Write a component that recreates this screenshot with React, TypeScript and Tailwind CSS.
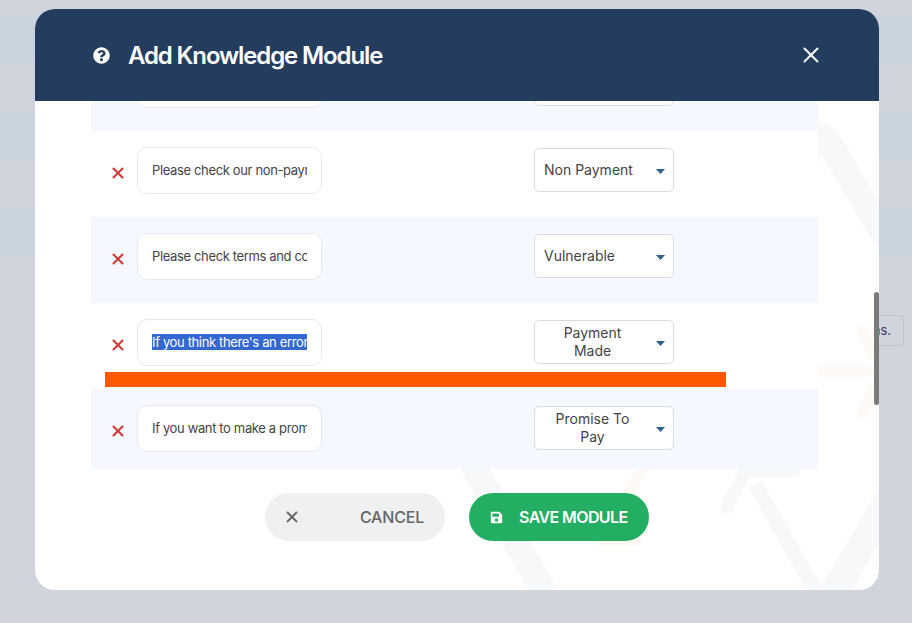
import { X } from "lucide-react";
import { FaQuestionCircle, FaSave } from "react-icons/fa";

const rows = [
  { text: "Please check our non-payment terms", label: "Arrangement", tinted: true, height: "h-[86px]" },
  { text: "Please check our non-payment terms", label: "Non Payment", tinted: false, height: "h-[86px]" },
  { text: "Please check terms and conditions", label: "Vulnerable", tinted: true, height: "h-[86px]" },
  { text: "If you think there's an error on this", label: "Payment Made", tinted: false, height: "h-[86px]", selected: true, wrapped: true },
  { text: "If you want to make a promise to pay", label: "Promise To Pay", tinted: true, height: "h-[80px]", wrapped: true },
];

function Watermark() {
  return (
    <svg className="absolute left-0 top-0 h-[581px] w-[844px]" viewBox="0 0 844 581" fill="none" strokeLinecap="round">
      <g fill="#f7f8fa">
        <path d="M783 114 Q798 114 808 131 L844 194 V244 L787 146 L783 155 Z" />
        <path d="M425 460 H455 L523 581 H493 Z" />
        <path d="M787 576 L844 479 V534 L817 581 H775 Z" />
      </g>
      <g stroke="#f7f8fa">
        <path d="M720 475 L780 581" strokeWidth="15" strokeLinecap="butt" />
        <path d="M710 463 L692 498" strokeWidth="13" />
        <path d="M710 463 H760" strokeWidth="10" />
      </g>
      <g stroke="#fff9f6" strokeWidth="12">
        <path d="M783 362 H833" />
        <path d="M828 323 L850 363 L828 403" />
        <path d="M607 460 L583 501" strokeWidth="10" />
        <path d="M565 532 H603" strokeWidth="10" />
      </g>
    </svg>
  );
}

type RowProps = { text: string; label: string; tinted: boolean; height: string; selected?: boolean; wrapped?: boolean };

function Row({ text, label, tinted, height, selected, wrapped }: RowProps) {
  return (
    <div className={`${height} shrink-0 flex items-start pt-4 ${tinted ? "bg-[#f5f9ff]" : "bg-white"}`}>
      <button className="ml-[20px] mt-[19px] w-[14px] h-[14px] flex items-center justify-center text-[#cf3c3c]">
        <X size={18} strokeWidth={2.8} className="shrink-0" />
      </button>
      <div className="ml-[12px] w-[185px] h-[47px] rounded-[10px] border border-[#e6e8ec] bg-white px-[14px] flex items-center">
        <div className="overflow-hidden whitespace-nowrap text-[13px] leading-[17px] tracking-[-0.36px] text-[#444]">
          <span className={selected ? "bg-[#3367d1] text-white" : ""}>{text}</span>
        </div>
      </div>
      <div className="ml-[212px] mt-px w-[140px] h-[44px] rounded-[5px] border border-[#d9dadd] bg-white flex items-center pl-[9px] pr-[8px]">
        <div className={`w-[97px] text-[14px] leading-[18px] text-[#444] ${wrapped ? "text-center" : "text-left"}`}>{label}</div>
        <svg className="ml-auto mt-[3px]" width="9" height="5" viewBox="0 0 9 5">
          <path d="M0 0 H9 L4.5 5 Z" fill="#2f6092" />
        </svg>
      </div>
    </div>
  );
}

export default function App() {
  return (
    <div className="relative w-[912px] h-[623px] overflow-hidden bg-[#d0d4dc] pt-[9px] pl-[35px]" style={{ fontFamily: "Inter, 'Noto Sans', sans-serif" }}>
      <div className="absolute left-0 top-[16px] w-full h-[47px] bg-[#c9d4df]" />
      <div className="absolute left-0 top-[111px] w-full h-[48px] bg-[#c9d4df]" />
      <div className="absolute left-0 top-[207px] w-full h-[48px] bg-[#c9d4df]" />
      <div className="absolute right-[8px] top-[315px] w-[60px] h-[31px] rounded-[2px] border border-[#c2c6d0] flex items-center justify-end pr-[12px] text-[13px] text-[#3b3b6b]">ns.</div>

      <div className="relative w-[844px] h-[581px] rounded-[20px] overflow-hidden bg-white">
        <Watermark />

        <div className="relative h-[92px] bg-[#243d5e] flex items-center pl-[58px] pr-[55px] text-white z-10">
          <FaQuestionCircle size={17} className="shrink-0" />
          <h2 className="ml-[18px] mt-[2px] text-[24px] font-semibold tracking-[-1.12px]">Add Knowledge Module</h2>
          <X size={26} strokeWidth={1.8} className="ml-auto" />
        </div>

        <div className="relative ml-[56px] w-[727px] h-[368px] flex flex-col justify-end overflow-hidden">
          {rows.map((row, i) => (
            <Row key={i} {...row} />
          ))}
          <div className="absolute left-[14px] bottom-[82px] w-[621px] h-[15px] bg-[#ff5900]" />
        </div>

        <div className="relative flex justify-center gap-6 pt-6">
          <button className="w-[180px] h-[48px] rounded-full bg-[#eff0f2] flex items-center justify-between pl-[18px] pr-[21px] text-[#666]">
            <X size={18} strokeWidth={2.4} />
            <span className="text-[16px] font-medium tracking-[-0.2px]">CANCEL</span>
          </button>
          <button className="w-[180px] h-[48px] rounded-full bg-[#23ae63] flex items-center pl-[21px] text-white">
            <FaSave size={13} />
            <span className="ml-[16px] text-[16px] font-semibold tracking-[-0.6px]">SAVE MODULE</span>
          </button>
        </div>

        <div className="absolute right-0 top-[283px] w-[5px] h-[113px] rounded-full bg-[#7a7a7a]" />
      </div>
    </div>
  );
}
